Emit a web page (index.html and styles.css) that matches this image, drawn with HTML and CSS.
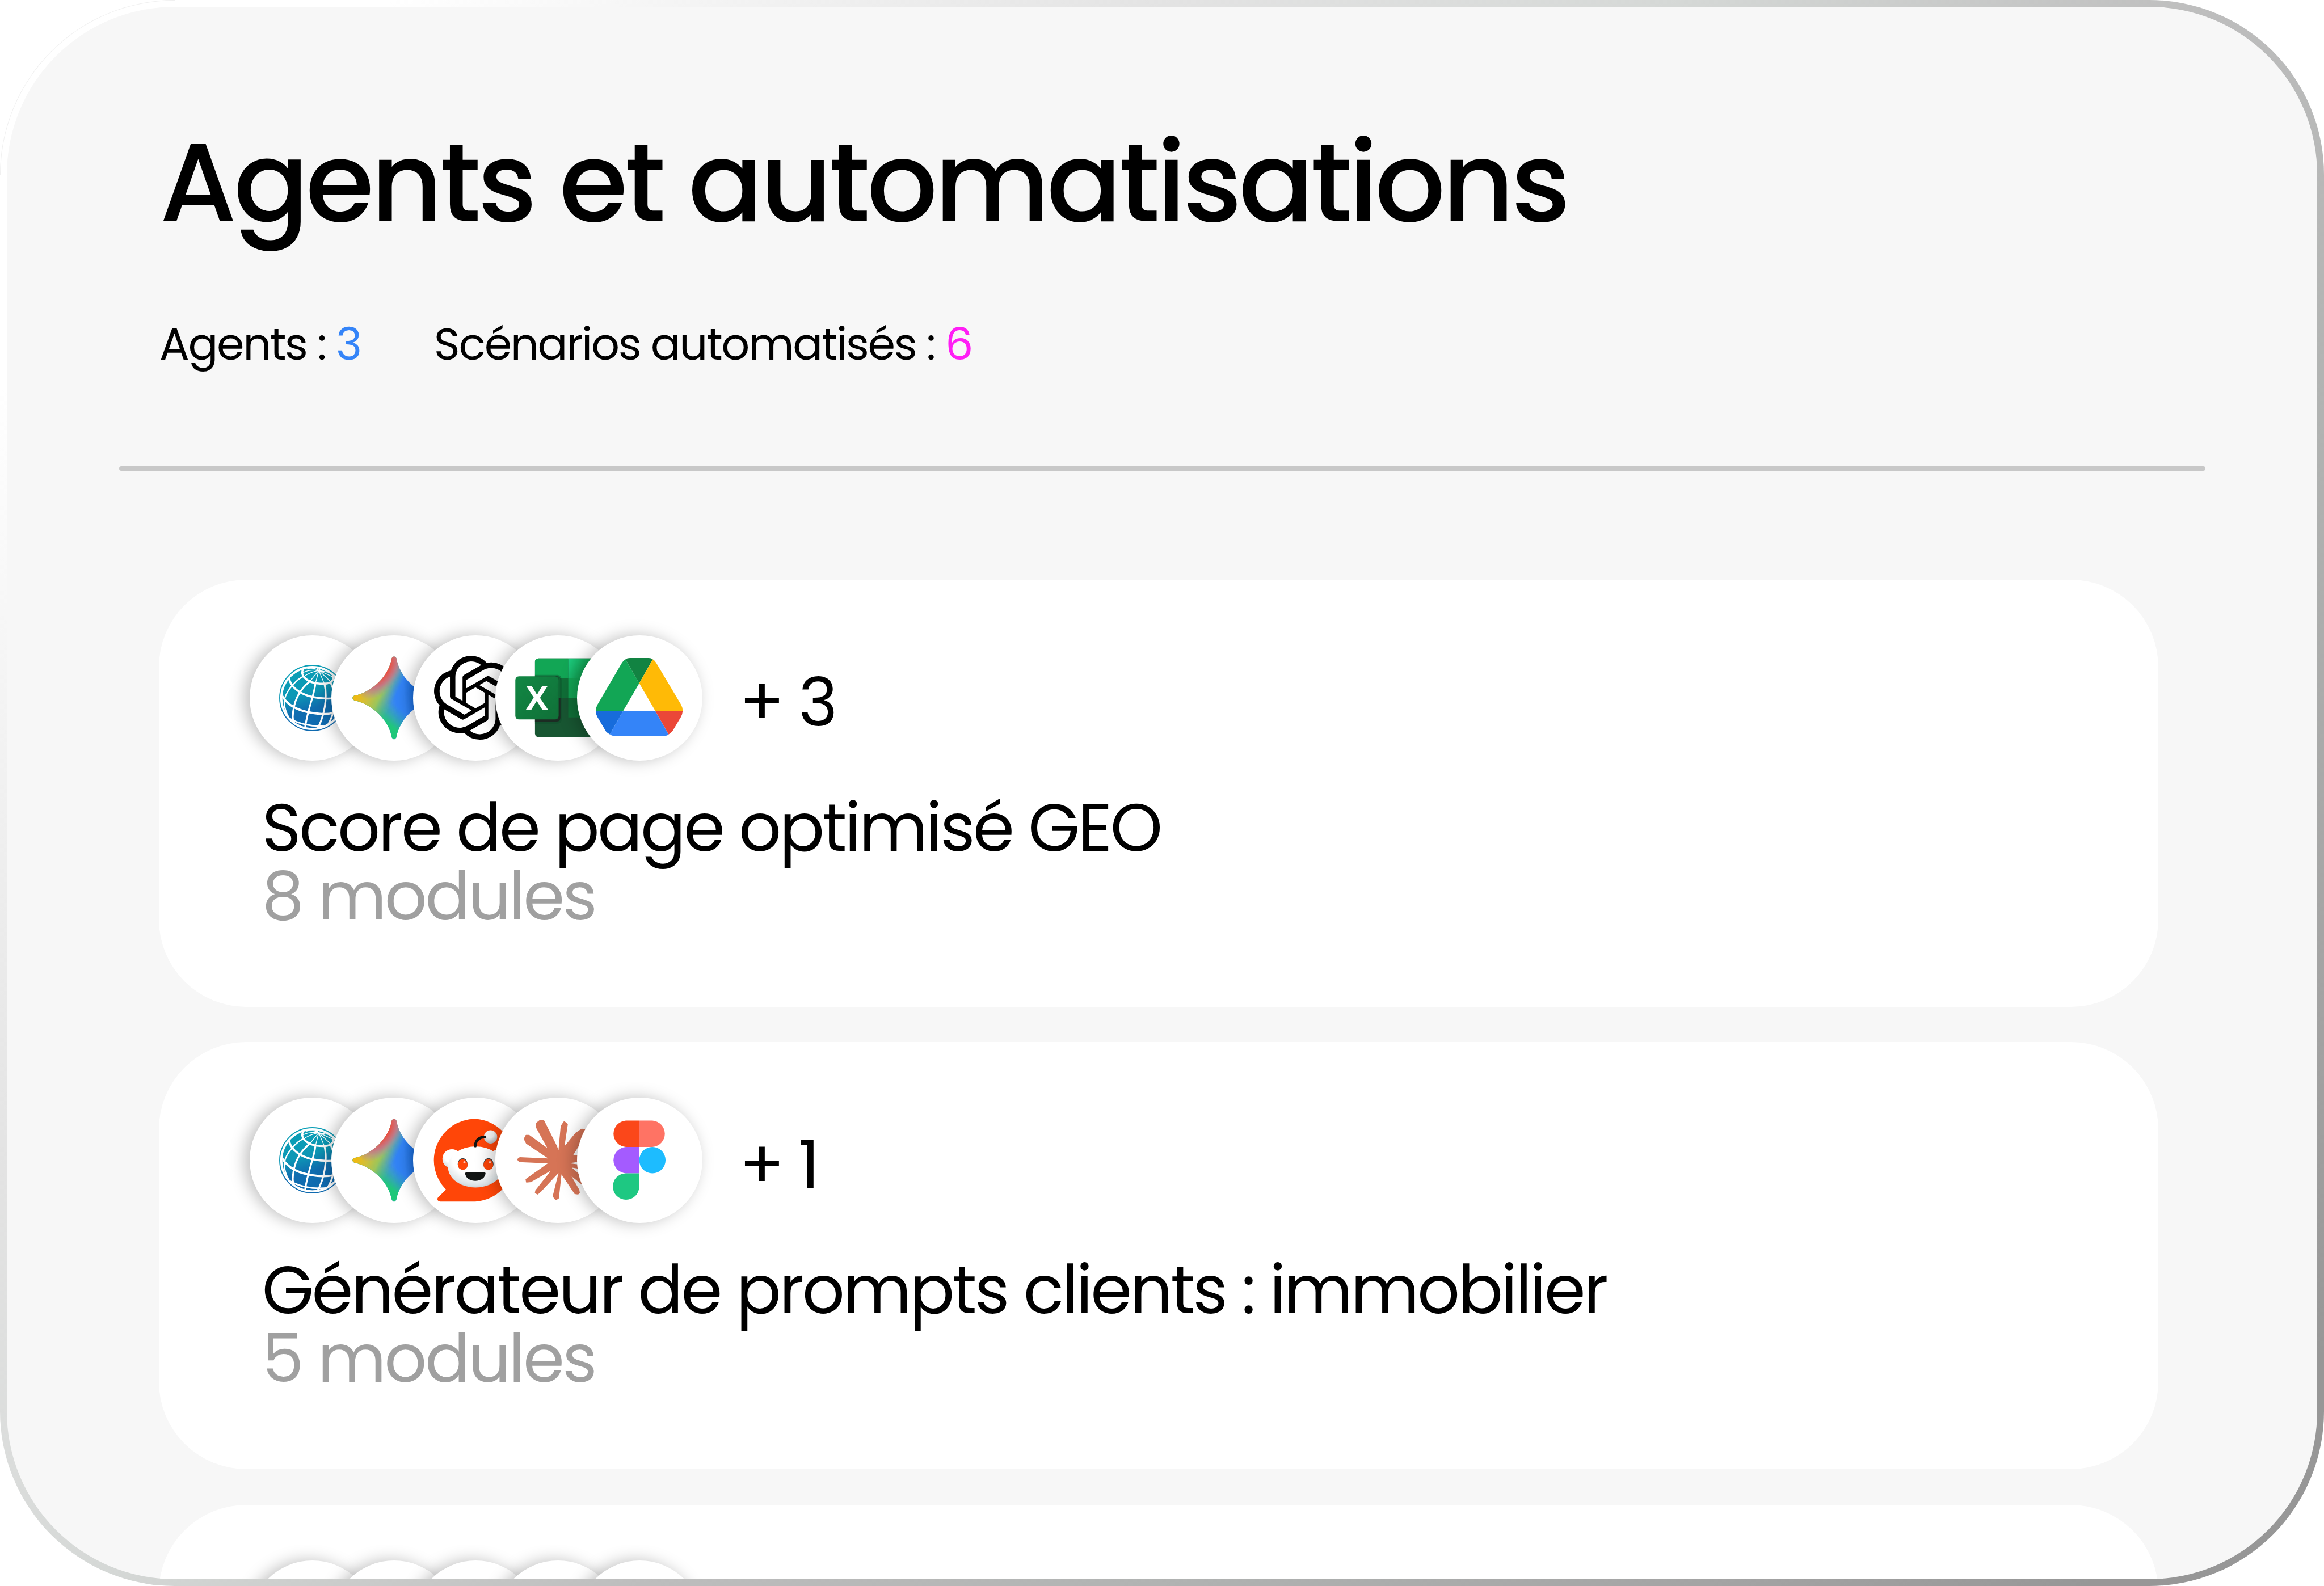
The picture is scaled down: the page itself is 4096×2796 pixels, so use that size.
FILE: index.html
```html
<!DOCTYPE html>
<html lang="fr">
<head>
<meta charset="utf-8">
<title>Agents et automatisations</title>
<link rel="stylesheet" href="styles.css">
</head>
<body>
<svg class="defs" width="0" height="0" aria-hidden="true">
  <defs>
    <linearGradient id="globe-fill" x1="0.35" y1="0" x2="0.65" y2="1">
      <stop offset="0" stop-color="#0a9fb6"/><stop offset="0.4" stop-color="#0d97b5"/><stop offset="0.66" stop-color="#106db0"/><stop offset="1" stop-color="#0f6ab0"/>
    </linearGradient>
    <clipPath id="globe-clip"><circle cx="141" cy="141" r="68"/></clipPath>
    <linearGradient id="star-blue" gradientUnits="userSpaceOnUse" x1="120" y1="150" x2="210" y2="141">
      <stop offset="0" stop-color="#4a97d0"/><stop offset="0.3" stop-color="#3284f8"/><stop offset="0.5" stop-color="#3284f8"/><stop offset="0.8" stop-color="#176cdb"/>
    </linearGradient>
    <radialGradient id="star-red" gradientUnits="userSpaceOnUse" cx="0" cy="0" r="1" gradientTransform="translate(112 76) rotate(-54) scale(78 44)">
      <stop offset="0" stop-color="#f5402f"/><stop offset="0.3" stop-color="#ef4a3c"/><stop offset="0.62" stop-color="#c86f86" stop-opacity="0.9"/><stop offset="1" stop-color="#8f84d8" stop-opacity="0"/>
    </radialGradient>
    <linearGradient id="star-green" gradientUnits="userSpaceOnUse" x1="118" y1="205" x2="152" y2="162">
      <stop offset="0.2" stop-color="#1fc77a"/><stop offset="1" stop-color="#35a9a8" stop-opacity="0"/>
    </linearGradient>
    <linearGradient id="star-yellow" gradientUnits="userSpaceOnUse" x1="64" y1="124" x2="134" y2="158">
      <stop offset="0" stop-color="#eeba14"/><stop offset="0.3" stop-color="#cfbf3c"/><stop offset="0.6" stop-color="#9cc55a"/><stop offset="1" stop-color="#5cb98a" stop-opacity="0"/>
    </linearGradient>
    <clipPath id="star-clip"><path d="M136 51Q141 44 146 51C153 92 190 129 231 136Q238 141 231 146C190 153 153 190 146 230Q141 238 136 230C129 190 92 155 51 146Q44 141 51 136C92 128 129 92 136 51Z"/></clipPath>
    <linearGradient id="sheet-light" x1="0" y1="0" x2="1" y2="0.3"><stop offset="0" stop-color="#1dcb80"/><stop offset="0.6" stop-color="#12a655"/></linearGradient>
    <linearGradient id="sheet-tile" x1="0" y1="0" x2="1" y2="1"><stop offset="0" stop-color="#128744"/><stop offset="1" stop-color="#107038"/></linearGradient>
    <radialGradient id="snoo-face" cx="0.5" cy="0.3" r="0.75"><stop offset="0.55" stop-color="#fff"/><stop offset="0.85" stop-color="#dbe3e6"/><stop offset="1" stop-color="#b9c5ca"/></radialGradient>
    <radialGradient id="snoo-ball" cx="0.45" cy="0.3" r="0.7"><stop offset="0.4" stop-color="#f4f4f4"/><stop offset="1" stop-color="#b5b9bb"/></radialGradient>

    <symbol id="globe" viewBox="0 0 282 282">
      <circle cx="141" cy="141" r="73.4" fill="#fff" stroke="url(#globe-fill)" stroke-width="2.4"/>
      <g clip-path="url(#globe-clip)">
        <circle cx="141" cy="141" r="67.5" fill="url(#globe-fill)"/>
        <g fill="none" stroke="#fff" stroke-width="4.6">
          <path d="M124 72C108 86 126 109 165 109C190 109 194 94 182 80"/>
          <path d="M88 92C90 118 118 140 169 142C186 143 200 141 214 136"/>
          <path d="M73 136C88 163 122 175 165 177C186 177 199 173 210 164"/>
          <path d="M86 185C108 199 140 207 176 203" stroke-width="3.4"/>
        </g>
        <g fill="none" stroke="#fff" stroke-width="4">
          <path d="M122 92C108 97 80 125 78 148C77 160 82 176 90 188" stroke-width="3"/>
          <path d="M136 103C112 122 98 150 97 183C97 194 101 200 104 206"/>
          <path d="M148 107C146 135 130 165 124 212"/>
          <path d="M168 108C176 140 168 185 150 214"/>
          <path d="M182 106C198 140 192 178 172 208"/>
        </g>
        <g fill="none" stroke="#fff" stroke-width="1.7">
          <path d="M155.500 79L136 103M155.500 79L148 108M155.500 79L168 109M155.500 79L182 104M155.500 79L190 95M155.500 79L192 86M155.500 79C140 82 128 88 120 94M155.500 79C140 77 128 80 119 84M155.500 79C146 73 136 73 126 76M155.500 79L150 72M155.500 79L164 71"/>
        </g>
      </g>
    </symbol>

    <symbol id="star" viewBox="0 0 282 282">
      <g clip-path="url(#star-clip)">
        <path fill="url(#star-blue)" d="M40 40H242V242H40Z"/>
        <path fill="url(#star-green)" d="M40 40H242V242H40Z"/>
        <path fill="url(#star-yellow)" d="M40 40H242V242H40Z"/>
        <path fill="url(#star-red)" d="M40 40H242V242H40Z"/>
      </g>
    </symbol>

    <symbol id="knot" viewBox="0 0 282 282">
      <path transform="translate(46 46.300) scale(7.860)" d="M22.2819 9.8211a5.9847 5.9847 0 0 0-.5157-4.9108 6.0462 6.0462 0 0 0-6.5098-2.9A6.0651 6.0651 0 0 0 4.9807 4.1818a5.9847 5.9847 0 0 0-3.9977 2.9 6.0462 6.0462 0 0 0 .7427 7.0966 5.98 5.98 0 0 0 .511 4.9107 6.051 6.051 0 0 0 6.5146 2.9001A5.9847 5.9847 0 0 0 13.2599 24a6.0557 6.0557 0 0 0 5.7718-4.2058 5.9894 5.9894 0 0 0 3.9977-2.9001 6.0557 6.0557 0 0 0-.7475-7.0729zm-9.022 12.6081a4.4755 4.4755 0 0 1-2.8764-1.0408l.1419-.0804 4.7783-2.7582a.7948.7948 0 0 0 .3927-.6813v-6.7369l2.02 1.1686a.071.071 0 0 1 .038.052v5.5826a4.504 4.504 0 0 1-4.4945 4.4944zm-9.6607-4.1254a4.4708 4.4708 0 0 1-.5346-3.0137l.142.0852 4.783 2.7582a.7712.7712 0 0 0 .7806 0l5.8428-3.3685v2.3324a.0804.0804 0 0 1-.0332.0615L9.74 19.9502a4.4992 4.4992 0 0 1-6.1408-1.6464zM2.3408 7.8956a4.485 4.485 0 0 1 2.3655-1.9728V11.6a.7664.7664 0 0 0 .3879.6765l5.8144 3.3543-2.0201 1.1685a.0757.0757 0 0 1-.071 0l-4.8303-2.7865A4.504 4.504 0 0 1 2.3408 7.872zm16.5963 3.8558L13.1038 8.364 15.1192 7.2a.0757.0757 0 0 1 .071 0l4.8303 2.7913a4.4944 4.4944 0 0 1-.6765 8.1042v-5.6772a.79.79 0 0 0-.407-.667zm2.0107-3.0231l-.142-.0852-4.7735-2.7818a.7759.7759 0 0 0-.7854 0L9.409 9.2297V6.8974a.0662.0662 0 0 1 .0284-.0615l4.8303-2.7866a4.4992 4.4992 0 0 1 6.6802 4.66zM8.3065 12.863l-2.02-1.1638a.0804.0804 0 0 1-.038-.0567V6.0742a4.4992 4.4992 0 0 1 7.3757-3.4537l-.142.0805L8.704 5.459a.7948.7948 0 0 0-.3927.6813zm1.0976-2.3654l2.602-1.4998 2.6069 1.4998v2.9994l-2.5974 1.4997-2.6067-1.4997Z"/>
    </symbol>

    <symbol id="sheet" viewBox="0 0 282 282">
      <rect x="89.200" y="52" width="148" height="177" rx="8" fill="#185632"/>
      <path d="M97.200 52H164V96.700H89.200V60Q89.200 52 97.200 52Z" fill="#12a655"/>
      <path d="M164 52H229Q237 52 237 60V96.700H164Z" fill="url(#sheet-light)"/>
      <path d="M89.200 96.700H164V140.700H89.200Z" fill="#107038"/>
      <path d="M164 96.700H237V140.700H164Z" fill="#12a655"/>
      <path d="M164 140.700H237V184.700H164Z" fill="#107038"/>
      <path d="M89.200 89H140Q149 90 149 99V190Q148 199 138 199H89.200Z" fill="#0c4a27" opacity="0.4"/>
      <path d="M89.200 92H138Q146.500 92 146.500 101V185Q146.500 194 138 194H89.200Z" fill="#202020" opacity="0.75"/>
      <path d="M138 92Q146.500 92 146.500 101V140.700H142V92Z" fill="#0f6835"/>
      <rect x="45" y="92.300" width="97.400" height="97" rx="8" fill="url(#sheet-tile)"/>
      <text x="93.700" y="167.500" class="tile-letter">X</text>
    </symbol>

    <symbol id="drive" viewBox="0 0 282 282">
      <path fill="#12a655" d="M42 170Q42 163 46 156L101 62Q104 57 109 54L139.900 107.700L103.800 170Z"/>
      <path fill="#128342" d="M109 54Q113 51 119 51H161Q167 51 170.500 54L139.900 107.700Z"/>
      <path fill="#ffba06" d="M170.500 54Q175 57 178 62L234 156Q237.700 163 237.700 170H176L139.900 107.700Z"/>
      <path fill="#176cdb" d="M42 170Q42 177 46 184L65 216Q68 220 74 223L103.800 170Z"/>
      <path fill="#3484f8" d="M103.800 170H176L206 223Q202 226.300 195 226.300H84Q78 226.300 74 223Z"/>
      <path fill="#eb4738" d="M176 170H237.700Q237 177 234 183L215 215Q211 220 206 223Z"/>
    </symbol>

    <symbol id="snoo" viewBox="0 0 282 282">
      <path fill="#ff4608" d="M140 48A93 93 0 0 1 140 233.700H60.700Q53 232 55.400 225.500L74 206.700A93 93 0 0 1 140 48Z"/>
      <circle cx="87.500" cy="137.500" r="21.500" fill="url(#snoo-face)"/>
      <circle cx="193.500" cy="137.500" r="21.500" fill="url(#snoo-face)"/>
      <ellipse cx="140.500" cy="156" rx="62" ry="46.300" fill="url(#snoo-face)"/>
      <path d="M100.500 150C101 132 122 131 122.500 150C123 166 101 166 100.500 150Z" fill="#3b4448"/>
      <path d="M101 152C101 134 122 134 122.500 152C122 166 102 166 101 152Z" fill="#ff4608"/>
      <path d="M158.500 150C159 131 181 132 181 150C180 166 158 166 158.500 150Z" fill="#3b4448"/>
      <path d="M158.500 152C159 134 180 134 180 152C180 166 159 166 158.500 152Z" fill="#ff4608"/>
      <circle cx="115.500" cy="145.500" r="2.600" fill="#ffc5b5"/>
      <circle cx="173" cy="145.500" r="2.600" fill="#ffc5b5"/>
      <path d="M119 168.500Q140 167 161 168.500Q164 169 162.500 173C158 192 122 192 117.500 173Q116.500 169 119 168.500Z" fill="#111413"/>
      <circle cx="174.300" cy="88.300" r="15" fill="url(#snoo-ball)"/>
      <path d="M140 109C140 94 152 88 162 88.500" fill="none" stroke="#111413" stroke-width="6" stroke-linecap="round"/>
    </symbol>

    <symbol id="burst" viewBox="0 0 282 282">
      <path fill="#d67456" stroke="#d67456" stroke-width="2" stroke-linejoin="round" d="M121 147L54 144L50 139L55 135L119 138L121 137L70 103L65 93L69 85L76 85L120 117L93 68L92 58L101 51L109 52L138 110L141 119L143 119L148 64L155 54L162 60L154 113L181 80L194 71L204 72L204 80L173 131L229 126L234 132L230 137L170 146L170 149L231 158L231 166L169 156L214 196L213 204L204 202L168 173L188 208L189 214L186 217L179 216L149 171L148 171L142 226L136 230L130 222L144 166L103 210L95 217L90 214L91 209L129 161L80 189L70 190L69 184Z"/>
    </symbol>

    <symbol id="figma" viewBox="0 0 282 282">
      <path fill="#fb471a" d="M140 51.700H110A29.700 29.700 0 0 0 110 111H140Z"/>
      <path fill="#ff7364" d="M139.900 51.700H169.500A29.700 29.700 0 0 1 169.500 111H139.900Z"/>
      <path fill="#a45bff" d="M140 111H110A29.700 29.700 0 0 0 110 170.300H140Z"/>
      <circle cx="169.500" cy="140.700" r="29.600" fill="#1dbcff"/>
      <path fill="#1ec882" d="M140 170.300H110A29.700 29.700 0 1 0 139.900 200Z"/>
    </symbol>
  </defs>
</svg>

<main class="frame">
  <div class="panel">
    <header class="head">
      <h1 class="title">Agents et automatisations</h1>
      <div class="stats">
        <p class="stat">Agents : <span class="count-agents">3</span></p>
        <p class="stat">Scénarios automatisés : <span class="count-scenarios">6</span></p>
      </div>
    </header>
    <hr class="divider">
    <section class="cards">
      <article class="card">
        <div class="apps">
          <div class="stack">
            <svg class="app"><use href="#globe"/></svg>
            <svg class="app"><use href="#star"/></svg>
            <svg class="app"><use href="#knot"/></svg>
            <svg class="app"><use href="#sheet"/></svg>
            <svg class="app"><use href="#drive"/></svg>
          </div>
          <span class="more">+ 3</span>
        </div>
        <h2 class="name">Score de page optimisé GEO</h2>
        <p class="modules">8 modules</p>
      </article>
      <article class="card">
        <div class="apps">
          <div class="stack">
            <svg class="app"><use href="#globe"/></svg>
            <svg class="app"><use href="#star"/></svg>
            <svg class="app"><use href="#snoo"/></svg>
            <svg class="app"><use href="#burst"/></svg>
            <svg class="app"><use href="#figma"/></svg>
          </div>
          <span class="more">+ 1</span>
        </div>
        <h2 class="name">Générateur de prompts clients : immobilier</h2>
        <p class="modules">5 modules</p>
      </article>
      <article class="card">
        <div class="apps">
          <div class="stack">
            <svg class="app"></svg>
            <svg class="app"></svg>
            <svg class="app"></svg>
            <svg class="app"></svg>
            <svg class="app"></svg>
          </div>
        </div>
      </article>
    </section>
  </div>
</main>
</body>
</html>
```
FILE: styles.css
```css
* { box-sizing: border-box; }
html, body { margin: 0; height: 100%; }
body {
  background: #fff;
  color: #000;
  font-family: Poppins, Inter, "Open Sans", sans-serif;
  letter-spacing: 0;
  overflow: hidden;
}
h1, h2, p { margin: 0; font-weight: 400; white-space: nowrap; }
.defs { position: absolute; }

.frame {
  position: relative;
  width: 4096px;
  height: 2796px;
  padding: 12px;
  border-radius: 308px;
  background: linear-gradient(135deg, #fff 10%, #e3e3e3 30%, #d5d8d6 43%, #bdbdbd 57%, #b1b3b2 70%, #a3a3a3 85%, #979797 94%);
}
/* hairline along the light corner */
.frame::before {
  content: "";
  position: absolute;
  left: 0;
  top: 0;
  width: 308px;
  height: 308px;
  border: 1px solid #f0f0f0;
  border-width: 1px 0 0 1px;
  border-top-left-radius: 308px;
}
.panel {
  height: 100%;
  border-radius: 296px;
  background: #f7f7f7;
  overflow: hidden;
}

.head { height: 810px; padding: 189.600px 0 0 269px; }
.title {
  font-size: 195.900px;
  font-weight: 500;
  line-height: 240px;
  letter-spacing: -0.03em;
}
.stats {
  display: flex;
  gap: 129px;
  margin-top: 115.600px;
}
.stat {
  font-size: 78.300px;
  line-height: 100px;
  letter-spacing: -0.03em;
}
.count-agents { color: #3484f8; }
.count-scenarios { color: #ff1ef5; }

.divider {
  width: 3677px;
  height: 8px;
  margin: 0 0 0 198px;
  border: 0;
  border-radius: 4px;
  background: #c8c8c8;
}

.cards {
  display: flex;
  flex-direction: column;
  gap: 62.600px;
  margin: 191.600px 0 0 267.700px;
}
.card {
  width: 3524px;
  height: 753px;
  flex: none;
  padding: 98px 0 0 160.500px;
  border-radius: 154px;
  background: #fff;
}
.apps { display: flex; align-items: center; gap: 65px; }
.stack { display: flex; }
.app {
  display: block;
  width: 221px;
  height: 221px;
  border-radius: 50%;
  background: #fff;
  box-shadow: -8px 0 28px rgba(0, 0, 0, 0.25);
}
.app + .app { margin-left: -76.900px; }
.more {
  padding-top: 16px;
  font-size: 117.500px;
  line-height: 120px;
  letter-spacing: -0.03em;
}
.name, .modules {
  margin-left: 21.500px;
  font-size: 117.500px;
  line-height: 121.200px;
  letter-spacing: -0.03em;
}
.name { margin-top: 58px; }
.modules { color: #a0a0a0; }

.tile-letter {
  font: 700 74px "Open Sans", sans-serif;
  fill: #fff;
  text-anchor: middle;
}
```
